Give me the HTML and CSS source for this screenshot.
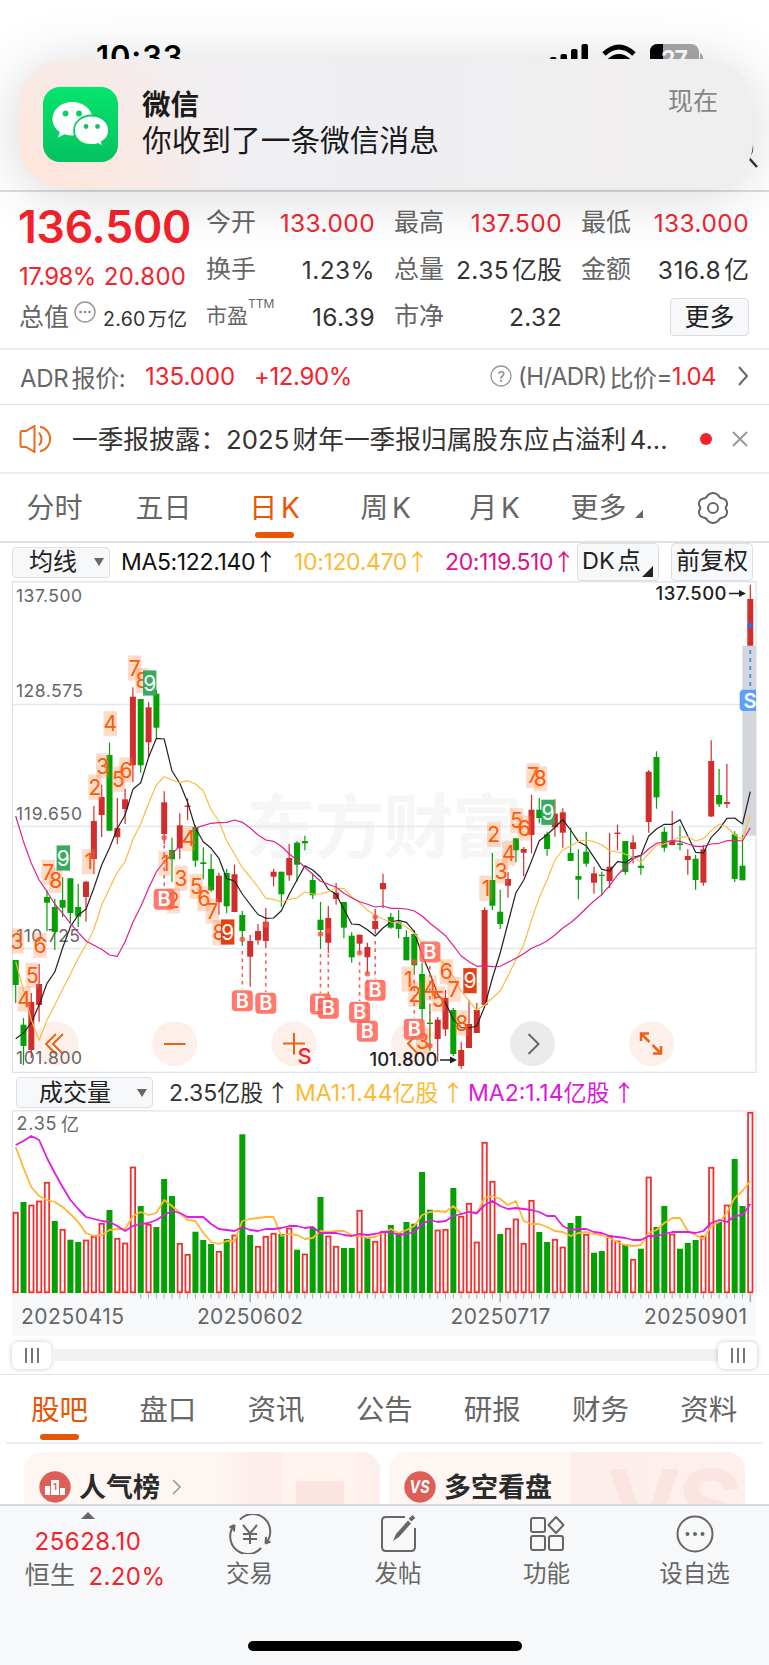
FILE: index.html
```html
<!DOCTYPE html>
<html lang="zh-CN">
  <head>
    <meta charset="UTF-8" />
    <meta name="viewport" content="width=device-width, initial-scale=1.0" />
    <title>行情 日K</title>
    <link rel="stylesheet" href="styles.css">
  </head>
  <body>
    <div class="screen">
      <div class="status-bar">
        <span class="time">10:33</span>
        <svg class="status-icons" width="156" height="28" viewBox="0 0 156 28">
          <rect x="1" y="14" width="6.5" height="14" rx="2" />
          <rect x="11.500" y="11" width="6.500" height="17" rx="2" />
          <rect x="22" y="6" width="6.500" height="22" rx="2" />
          <rect x="32.500" y="1" width="6.500" height="27" rx="2" />
          <g fill="none" stroke="#000" stroke-width="5">
            <path d="M55 11 Q70 -3 85 11" />
            <path d="M60 18 Q70 9 80 18" />
          </g>
          <rect x="101" y="1" width="49" height="26" rx="8" fill="#a8a8a8" />
          <path d="M109 1 H114 V27 H101 V9 Q101 1 109 1Z" />
          <path d="M151 10 q3 2 3 4 v6 h-3z" fill="#a8a8a8" />
          <text x="112" y="24" fill="#fff" font-size="23" font-weight="700" textLength="27">27</text>
        </svg>
      </div>
      <div class="nav-bar">
        <svg width="22" height="34" viewBox="0 0 22 34" fill="none" stroke="#333" stroke-width="2.500">
          <circle cx="-1" cy="12" r="12" />
          <path d="M7 21 L16 31" />
        </svg>
      </div>

      <div class="notice">
        <svg class="wechat" width="75" height="75" viewBox="0 0 75 75">
          <defs>
            <linearGradient id="wx" x1="0" y1="0" x2="0" y2="1">
              <stop offset="0" stop-color="#05e56c" />
              <stop offset="1" stop-color="#06c160" />
            </linearGradient>
          </defs>
          <rect width="75" height="75" rx="17" fill="url(#wx)" />
          <path fill="#fff" d="M29.500 15 C18 15 9.500 22.500 9.500 32 c0 5.500 2.800 10 7.300 13 l-1.800 5.500 6.500-3.300 c2.600.8 5.200 1.200 8 1.200 11 0 20-7.300 20-16.400 S40.500 15 29.500 15z" />
          <circle cx="22.500" cy="26.500" r="2.900" fill="#09cf65" />
          <circle cx="36" cy="26.500" r="2.900" fill="#09cf65" />
          <path fill="#fff" stroke="#07cd63" stroke-width="1.800" d="M48.500 28.500 C38.500 28.500 31 35 31 43.500 S38.500 58 48.500 58 c2.200 0 4.400-.3 6.400-1 l5.300 2.800-1.400-4.800 C63.500 52.200 66 48.200 66 43.500 66 35 58.500 28.500 48.500 28.500z" />
          <circle cx="43" cy="39.500" r="2.400" fill="#07c862" />
          <circle cx="54.500" cy="39.500" r="2.400" fill="#07c862" />
        </svg>
        <div class="notice-text">
          <strong>微信</strong>
          <p>你收到了一条微信消息</p>
        </div>
        <span class="notice-time">现在</span>
      </div>

      <div class="quote">
        <div class="quote-main">
          <div class="price">136.500</div>
          <div class="change"><span>17.98%</span><span class="amount">20.800</span></div>
          <div class="total">
            <span class="label">总值</span>
            <svg width="22" height="22" viewBox="0 0 22 22">
              <circle cx="11" cy="11" r="10" fill="none" stroke="#999" stroke-width="1.500" />
              <g fill="#888"><circle cx="6.500" cy="11" r="1.300" /><circle cx="11" cy="11" r="1.300" /><circle cx="15.500" cy="11" r="1.300" /></g>
            </svg>
            <span class="small-val">2.60<i>万亿</i></span>
          </div>
        </div>
        <dl class="quote-grid">
          <div><dt>今开</dt><dd class="red">133.000</dd></div>
          <div><dt>最高</dt><dd class="red">137.500</dd></div>
          <div><dt>最低</dt><dd class="red">133.000</dd></div>
          <div><dt>换手</dt><dd>1.23%</dd></div>
          <div><dt>总量</dt><dd>2.35<i>亿股</i></dd></div>
          <div><dt>金额</dt><dd>316.8<i>亿</i></dd></div>
          <div><dt class="pe">市盈<sup>TTM</sup></dt><dd>16.39</dd></div>
          <div><dt>市净</dt><dd>2.32</dd></div>
          <div class="more"><button>更多</button></div>
        </dl>
      </div>

      <div class="adr">
        <span class="adr-label">ADR<i>报价:</i></span>
        <span class="red adr-price">135.000</span>
        <span class="red">+12.90%</span>
        <span class="adr-right">
          <svg width="22" height="22" viewBox="0 0 22 22">
            <circle cx="11" cy="11" r="10" fill="none" stroke="#999" stroke-width="1.300" />
            <text x="11" y="16.500" font-size="15" text-anchor="middle" fill="#888">?</text>
          </svg>
          (H/ADR)<i>比价</i>=<b>1.04</b>
        </span>
        <svg class="adr-arrow" width="12" height="20" viewBox="0 0 12 20" fill="none" stroke="#666" stroke-width="2"><path d="M2 1 L10 10 L2 19" /></svg>
      </div>

      <div class="news">
        <svg width="34" height="28" viewBox="0 0 34 28" fill="none" stroke="#ea6a1c" stroke-width="2">
          <path d="M1.500 8 Q1.500 6 3 6 H7 L15.500 1 V27 L7 22 H3 Q1.500 22 1.500 20 Z" />
          <path d="M20 7.500 Q25 14 20 20.500" />
          <path d="M21 1.800 C34.500 4.500 34.500 23.500 21 26.200" />
        </svg>
        <p>一季报披露：2025 财年一季报归属股东应占溢利 4...</p>
        <span class="dot"></span>
        <svg width="16" height="16" viewBox="0 0 16 16" stroke="#999" stroke-width="2"><path d="M1 1 L15 15 M15 1 L1 15" /></svg>
      </div>

      <div class="period-tabs">
        <span>分时</span>
        <span>五日</span>
        <span class="active">日 K</span>
        <span>周 K</span>
        <span>月 K</span>
        <span class="with-corner">更多</span>
        <svg width="32" height="32" viewBox="0 0 32 32" fill="none" stroke="#666" stroke-width="2">
          <path d="M11 3 Q16 -1 21 3 Q22.500 6 25.500 6.500 Q30.500 7.500 30 13 Q27.500 16 30 19 Q30.500 24.500 25.500 25.500 Q22.500 26 21 29 Q16 33 11 29 Q9.500 26 6.500 25.500 Q1.500 24.500 2 19 Q4.500 16 2 13 Q1.500 7.500 6.500 6.500 Q9.500 6 11 3Z" />
          <circle cx="16" cy="16" r="5" />
        </svg>
      </div>

      <div class="ma-row">
        <span class="select ma-select">均线</span>
        <span class="ma5">MA5:122.140<i>↑</i></span>
        <span class="ma10">10:120.470<i>↑</i></span>
        <span class="ma20">20:119.510<i>↑</i></span>
        <span class="box dk">DK 点</span>
        <span class="box">前复权</span>
      </div>

      <svg id="kline" class="kline" width="769" height="493" viewBox="0 581 769 493"></svg>

      <div class="vol-row">
        <span class="select vol-select">成交量</span>
        <span class="vol-now">2.35亿股<i>↑</i></span>
        <span class="vol-ma1">MA1:1.44亿股<i>↑</i></span>
        <span class="vol-ma2">MA2:1.14亿股<i>↑</i></span>
      </div>

      <svg id="volume" class="volume" width="769" height="226" viewBox="0 1110 769 226"></svg>

      <div class="slider">
        <span class="handle"><i></i><i></i><i></i></span>
        <span class="track"></span>
        <span class="handle"><i></i><i></i><i></i></span>
      </div>

      <div class="info-tabs">
        <span class="active">股吧</span>
        <span>盘口</span>
        <span>资讯</span>
        <span>公告</span>
        <span>研报</span>
        <span>财务</span>
        <span>资料</span>
      </div>

      <div class="cards">
        <div class="card rank">
          <svg width="32" height="32" viewBox="0 0 32 32">
            <circle cx="16" cy="16" r="15.700" fill="#dd5f57" />
            <path d="M6 15 h5 v9 h-5z M12 9 h8 v15 h-8z M21 17 h5 v7 h-5z" fill="#fff" />
            <text x="16" y="19" font-size="9" font-weight="700" text-anchor="middle" fill="#dd5f57">1</text>
          </svg>
          <strong>人气榜</strong>
          <svg width="10" height="16" viewBox="0 0 10 16" fill="none" stroke="#999" stroke-width="1.600"><path d="M1 1 L8 8 L1 15" /></svg>
        </div>
        <div class="card versus">
          <svg width="32" height="32" viewBox="0 0 32 32">
            <circle cx="16" cy="16" r="15.700" fill="#dd5f57" />
            <text x="15.500" y="22" font-size="17" font-weight="700" font-style="italic" text-anchor="middle" textLength="20" lengthAdjust="spacingAndGlyphs" fill="#fff">VS</text>
          </svg>
          <strong>多空看盘</strong>
          <span class="ghost">VS</span>
        </div>
      </div>

      <div class="bottom-bar">
        <div class="index">
          <span class="up"></span>
          <span class="red index-val">25628.10</span>
          <span class="index-row"><i>恒生</i><b class="red">2.20%</b></span>
        </div>
        <div class="tool">
          <svg width="44" height="40" viewBox="0 0 44 40" fill="none" stroke="#666" stroke-width="2">
            <path d="M12 5.500 A17.500 17.500 0 0 1 37.500 29.500 L42.500 27.500 M37.500 29.500 L38 23" />
            <path d="M33 34 A17.500 17.500 0 0 1 6.500 11 L1.500 13.500 M6.500 11 L6 17.500" />
            <path d="M15 11 L22 19.500 L29 11 M22 19.500 V30 M15 20 H29 M15 25 H29" />
          </svg>
          <span>交易</span>
        </div>
        <div class="tool">
          <svg width="44" height="40" viewBox="0 0 44 40" fill="none" stroke="#666" stroke-width="2">
            <path d="M28 3 H9 Q5 3 5 7 V33 Q5 37 9 37 H34 Q38 37 38 33 V14" />
            <path d="M16 27 L19 20 L31 6.500 L34 9.500 L22 23Z" fill="#666" stroke="none" />
            <path d="M33 6 L37 2.500" stroke-width="4" />
          </svg>
          <span>发帖</span>
        </div>
        <div class="tool">
          <svg width="44" height="40" viewBox="0 0 44 40" fill="none" stroke="#666" stroke-width="2">
            <rect x="6" y="4" width="14" height="14" rx="2" />
            <rect x="6" y="22" width="14" height="14" rx="2" />
            <rect x="24" y="22" width="14" height="14" rx="2" />
            <path d="M31 3 L38.500 11 L31 19 L23.500 11Z" stroke-linejoin="round" />
          </svg>
          <span>功能</span>
        </div>
        <div class="tool">
          <svg width="44" height="40" viewBox="0 0 44 40">
            <circle cx="22" cy="20" r="17.500" fill="none" stroke="#666" stroke-width="2" />
            <g fill="#666"><circle cx="14.500" cy="20" r="2" /><circle cx="22" cy="20" r="2" /><circle cx="29.500" cy="20" r="2" /></g>
          </svg>
          <span>设自选</span>
        </div>
        <div class="home-bar"></div>
      </div>
    </div>
    <script src="chart.js"></script>
  </body>
</html>
```

FILE: styles.css
```css
* {
  margin: 0;
  padding: 0;
  box-sizing: border-box;
}

body {
  font-family: Inter, "Noto Sans CJK SC", sans-serif;
  background: #fff;
  color: #333;
}

i {
  font-style: normal;
}

b {
  font-weight: normal;
}

svg {
  display: block;
  flex: none;
}

svg text {
  font-family: Inter, "Noto Sans CJK SC", sans-serif;
}

.red {
  color: #f5222a;
}

.screen {
  position: relative;
  width: 769px;
  height: 1665px;
  overflow: hidden;
  display: flex;
  flex-direction: column;
}

.screen > * {
  flex: none;
}

.status-bar {
  height: 100px;
  padding: 43px 64px 0 96px;
  display: flex;
  justify-content: space-between;
}

.time {
  color: #000;
  font-size: 31px;
  line-height: 28px;
  font-weight: 600;
  letter-spacing: 0.9px;
}

.nav-bar {
  height: 92px;
  border-bottom: 2px solid #dcdcdc;
  display: flex;
  justify-content: flex-end;
  padding: 36px 6px 0 0;
}

/* push notification banner over the page */
.notice {
  position: absolute;
  left: 18px;
  top: 59px;
  width: 735px;
  height: 129px;
  border-radius: 46px;
  padding: 0 35px 0 25px;
  display: flex;
  background: radial-gradient(ellipse 190px 150px at 20px 115px, #ffe5db, rgba(255, 229, 219, 0)), linear-gradient(90deg, #f5edeb 0, #f0eff3 34%, #eeeef2 52%, #f1efef 80%, #efefef 100%);
  box-shadow: 0 6px 60px rgba(0, 0, 0, 0.16);
}

.wechat {
  margin-top: 28px;
}

.notice-text {
  flex: 1;
  padding: 27px 0 0 24px;
  color: #1a1a1a;
}

.notice-text strong {
  display: block;
  font-size: 28.500px;
  line-height: 38px;
}

.notice-text p {
  font-size: 29.700px;
  line-height: 33px;
}

.notice-time {
  font-size: 25px;
  line-height: 36px;
  margin-top: 24px;
  color: #858585;
}

.quote {
  height: 158px;
  border-bottom: 2px solid #ececec;
  display: flex;
  padding: 8px 19px 0;
}

.quote-main {
  width: 187px;
  white-space: nowrap;
}

.price {
  color: #f5222a;
  font-size: 44.500px;
  line-height: 54px;
  font-weight: 600;
  letter-spacing: -0.2px;
  margin-left: -1px;
}

.change {
  display: flex;
  color: #f5222a;
  font-size: 24px;
  line-height: 46px;
  letter-spacing: -0.6px;
}

.change .amount {
  margin-left: 8px;
  letter-spacing: 0.3px;
}

.total {
  display: flex;
  font-size: 25px;
  line-height: 34px;
  color: #666;
}

.total svg {
  margin: 1px 7px 0 5px;
}

.small-val {
  font-size: 19.500px;
  line-height: 38px;
  color: #333;
  letter-spacing: 0.3px;
}

.small-val i {
  margin-left: 2px;
}

.quote-grid {
  flex: 1;
  display: grid;
  grid-template-columns: 169px 168px 168px;
  grid-template-rows: 47px 47px 47px;
  column-gap: 19px;
}

.quote-grid div {
  display: flex;
  align-items: center;
  justify-content: space-between;
  white-space: nowrap;
  font-size: 24.500px;
  letter-spacing: 0.4px;
  line-height: 42px;
  padding-bottom: 2px;
}

.quote-grid dt {
  color: #666;
  font-size: 25px;
  letter-spacing: 0;
  line-height: 40px;
  margin-top: -2px;
}

.quote-grid dt.pe {
  font-size: 21px;
  position: relative;
}

.pe sup {
  position: absolute;
  left: 42px;
  top: -12px;
  font-size: 12px;
}

.quote-grid dd i {
  font-size: 25px;
  margin-left: 3px;
  letter-spacing: 0;
}

.quote-grid .more {
  justify-content: flex-end;
}

.more button {
  width: 79px;
  height: 38px;
  border: 1px solid #d9dce3;
  border-radius: 4px;
  background: #f7f8fa;
  font: 25px "Noto Sans CJK SC", sans-serif;
  line-height: 32px;
  padding-bottom: 3px;
  color: #222;
}

.adr {
  height: 55px;
  border-bottom: 1.500px solid #e2e3e8;
  display: flex;
  align-items: center;
  padding: 0 20px 2px;
  font-size: 24px;
}

.adr-label {
  width: 125px;
  color: #666;
  letter-spacing: -0.3px;
}

.adr-label i {
  margin-left: 3px;
}

.adr-price {
  width: 109px;
}

.adr-price + .red {
  letter-spacing: -0.4px;
}

.adr-right {
  margin-left: auto;
  display: flex;
  align-items: center;
  color: #666;
  letter-spacing: -0.6px;
}

.adr-right svg {
  margin-right: 6px;
}

.adr-right i {
  margin-left: 3px;
}

.adr-right b {
  color: #f5222a;
}

.adr-arrow {
  margin-left: 21px;
}

.news {
  height: 69px;
  border-bottom: 2px solid #eee;
  display: flex;
  align-items: center;
  padding: 0 20px 0 19px;
}

.news p {
  font-size: 25.700px;
  width: 600px;
  margin-left: 19px;
  margin-top: -2px;
  white-space: nowrap;
  word-spacing: -4px;
}

.dot {
  width: 12px;
  height: 12px;
  border-radius: 50%;
  background: #f5222a;
  margin: 0 20px 0 auto;
}

.news svg:last-child {
  margin-right: 1px;
}

.period-tabs {
  height: 69px;
  border-bottom: 2px solid #dfe1e9;
  display: grid;
  grid-template-columns: 109px 109px 113px 109px 109px 131px 65px;
  align-items: center;
  text-align: center;
  font-size: 28px;
  word-spacing: -4px;
  color: #666;
}

.period-tabs span {
  line-height: 66px;
}

.period-tabs .active {
  color: #ea5504;
}

.period-tabs .active::after,
.info-tabs .active::after {
  content: "";
  display: block;
  width: 39px;
  height: 6px;
  margin: -9px auto 3px;
  border-radius: 3px;
  background: #ea5504;
}

.period-tabs .with-corner {
  padding-right: 34px;
}

.with-corner::after {
  content: "";
  display: inline-block;
  margin-left: 8px;
  margin-right: -18px;
  border-bottom: 8px solid #666;
  border-left: 8px solid transparent;
}

.period-tabs svg {
  margin-left: 17px;
}

.ma-row {
  height: 38px;
  padding-left: 12px;
  display: grid;
  grid-template-columns: 109px 173px 151px 132px 94px 82px;
  align-items: center;
  font-size: 23px;
  letter-spacing: -0.35px;
  line-height: 34px;
  white-space: nowrap;
}

.ma-row .ma5,
.ma-row .ma10,
.ma-row .ma20 {
  margin-top: -3px;
}

.ma-row i,
.vol-row i {
  font-family: "Noto Sans CJK SC", sans-serif;
  display: inline-block;
  width: 16px;
}

.ma-row i {
  text-indent: -1px;
}

.vol-row i {
  text-indent: 3px;
}

.select,
.box {
  border: 1.500px solid #dddfe5;
  border-radius: 4px;
  background: #f7f8fa;
  font-size: 24px;
  letter-spacing: 0;
  color: #222;
}

.select {
  height: 31px;
  line-height: 26px;
  display: flex;
  align-items: center;
  justify-content: space-between;
}

.select::after {
  content: "";
  border: 5px solid transparent;
  border-top: 8px solid #666;
  border-bottom: 0;
}

.ma-select {
  width: 98px;
  padding: 0 5px 0 16px;
}

.ma5 {
  color: #111;
}

.ma10 {
  color: #fdb933;
}

.ma20 {
  color: #dd1188;
}

.box {
  position: relative;
  height: 38px;
  line-height: 34px;
  text-align: center;
  width: 82px;
}

.dk {
  text-align: left;
  padding-left: 4px;
  font-size: 23.500px;
  word-spacing: -4px;
}

.dk::after {
  content: "";
  position: absolute;
  right: 5px;
  bottom: 3px;
  border-bottom: 11px solid #222;
  border-left: 11px solid transparent;
}

.vol-row {
  height: 36px;
  padding: 3px 0 0 16px;
  display: grid;
  grid-template-columns: 153px 126px 173px auto;
  font-size: 23px;
  line-height: 28px;
  white-space: nowrap;
}

.vol-select {
  width: 137px;
  padding: 0 5px 0 22px;
}

.vol-ma1 {
  color: #fdb933;
}

.vol-ma2 {
  color: #e014e0;
}

.slider {
  height: 39px;
  border-bottom: 1.500px solid #e3e4ea;
  margin-bottom: 1px;
  padding: 0 12px;
  display: flex;
  align-items: center;
}

.track {
  flex: 1;
  height: 12px;
  background: #f1f1f4;
}

.handle {
  width: 39px;
  height: 27px;
  border-radius: 6px;
  background: #fff;
  box-shadow: 0 0 5px rgba(0, 0, 0, 0.22);
  display: flex;
  align-items: center;
  justify-content: center;
  gap: 4px;
}

.handle i {
  width: 2px;
  height: 15px;
  background: #777;
}

.info-tabs {
  height: 68px;
  margin: 0 6px;
  border-bottom: 2px solid #ececec;
  display: grid;
  grid-template-columns: repeat(7, 108.200px);
  text-align: center;
  font-size: 28.500px;
  line-height: 67px;
  color: #666;
}

.info-tabs span {
  margin-left: -1px;
}

.info-tabs .active {
  color: #ea5504;
}

.info-tabs .active::after {
  margin-top: -9px;
}

.cards {
  height: 60px;
  padding: 8px 24px 0;
  display: flex;
  gap: 9px;
  overflow: hidden;
}

.card {
  position: relative;
  width: 356px;
  height: 90px;
  flex: none;
  border-radius: 18px;
  overflow: hidden;
  display: flex;
  align-items: flex-start;
  padding: 19px 0 0 15px;
}

.card strong {
  font-size: 27px;
  line-height: 34px;
  margin: 0 12px 0 8px;
  font-weight: 700;
  color: #2b2b2b;
}

.card svg:nth-of-type(2) {
  margin-top: 8px;
}

.rank {
  background: linear-gradient(90deg, transparent 272px, #fbe3e0 272px, #fbe3e0 320px, transparent 320px) 0 29px no-repeat, linear-gradient(90deg, #fef6f2 195px, #fdeeeb 225px, #fdeeeb 258px, #fef3ef 258px, #fef3ef 333px, #fdefec 333px);
}

.versus {
  background: linear-gradient(90deg, #fef6f2 180px, #fdeeeb 182px, #fdefec);
}

.ghost {
  position: absolute;
  right: 6px;
  top: 9px;
  font-size: 100px;
  line-height: 90px;
  font-weight: 700;
  color: #fbe5e2;
  letter-spacing: -4px;
}

.bottom-bar {
  position: relative;
  height: 163px;
  border-top: 2px solid #d9dade;
  background: #f7f8fa;
  display: grid;
  grid-template-columns: 176px 148px 149px 148px 148px;
}

.index {
  display: flex;
  flex-direction: column;
  align-items: center;
  font-size: 24px;
}

.up {
  margin-top: 6px;
  border: 7px solid transparent;
  border-bottom: 7px solid #666;
  border-top: 0;
}

.index-val {
  line-height: 46px;
  letter-spacing: 0.5px;
}

.index-row {
  display: flex;
  gap: 13px;
  line-height: 24px;
  padding-left: 14px;
  letter-spacing: 0.4px;
}

.index-row i {
  font-size: 25px;
  line-height: 20px;
  color: #666;
}

.tool {
  display: flex;
  flex-direction: column;
  align-items: center;
  padding-top: 8px;
}

.tool span {
  margin-top: 3px;
  margin-left: -1px;
  font-size: 23.500px;
  line-height: 34px;
  color: #666;
}

.home-bar {
  position: absolute;
  left: 248px;
  bottom: 16px;
  width: 274px;
  height: 10px;
  border-radius: 5px;
  background: #000;
}
```

FILE: chart.js
```js
const STEP = 7.815;
const X0 = 15.7;
const RED = "#d22d2d";
const GREEN = "#04a004";
const cx = (i) => X0 + i * STEP;

// color, high, body top, body bottom, low
const candles = [
  ["g",960,960,985,1003],["g",1018,1024.7,1046,1065],["r",993,1002,1050,1058],["r",964,984,1005,1021.7],["g",890,897,902.7,931],
  ["g",898.7,907,932,950],["g",877,900,907.7,917],["g",878,878.3,913,923],["g",883.7,907,916.7,927],["r",881,881.7,897,921.7],
  ["r",806,821,859,874],["r",784.7,797,815,837],["g",742.7,755,830.7,831],["r",798,828,837.3,844],["r",788.7,799.3,809,824],
  ["r",687.3,696.7,765.3,782],["g",699,699,765.3,772.7],["r",702,707.3,742.3,757],["g",690,693.7,727.7,738],["r",791.3,802.3,834,844],
  ["g",837.7,850,859.3,881.7],["r",813.3,825.3,848.3,859],["r",798.3,805.6,807,820],["g",825,827,860.7,867],["g",847.3,862.3,864,879.3],
  ["g",854,869,890.3,891.7],["r",872.7,875.7,902.3,914.7],["g",869,873,906.3,913.3],["r",864.7,874.3,912,912],["g",911,915,931,945.7],
  ["r",935,941,956.7,986.7],["r",924,931,940.3,944.7],["r",908,921.7,941,948.3],["r",868.7,871.7,876.7,886.3],["g",871.7,871.7,894.3,906.7],
  ["r",844,858,875.3,880.7],["g",841.3,842.7,864.7,881.3],["g",835.7,841,843.3,850.3],["g",873.3,880,895.3,899],["g",902,919.7,930,949],
  ["r",906,918,942.7,953],["r",883,892.7,899,904.7],["g",902,902,927.7,938.3],["g",932.3,935.7,957.3,962.7],["r",934.7,934.7,943.7,953.3],
  ["r",942.7,947,957.3,974],["r",909,921,929,934],["r",873.7,883,889.3,908],["g",913,917,927.7,928.7],["g",910,922.3,929,938.3],
  ["g",930.3,937,960.3,960.3],["g",930,934,965.3,974.7],["g",962.7,974,1009,1023],["g",1006.7,1022.6,1024,1050.7],["r",1017,1019.7,1039,1061.7],
  ["r",990,998,1029.3,1036],["g",1008,1010,1054,1056],["r",1041.7,1050,1066,1068.7],["r",999.7,1024,1048,1048],["r",1002.7,1010,1033,1033],
  ["r",907.3,910,1005,1005],["g",853,880,905.7,910],["g",889.7,911.7,924,929],["r",872,879,885.7,897.7],["g",838.3,838.3,850.3,862.3],
  ["r",847,849,852.7,876],["r",794.7,809.7,835,853.3],["g",798,809.7,818,823.3],["g",831.7,834.3,849,855.7],["r",799.3,813.7,827.3,836.7],
  ["r",808.3,812.3,832.7,847.7],["g",827.7,853,861,861],["g",849.3,876,879.7,899.3],["g",831.7,851.7,863.7,866.7],["r",866.7,873.3,882.7,893.7],
  ["g",871.7,874.8,876,895],["r",833,866.7,881,888.3],["r",824.7,832.6,834,850.3],["g",841,841,872,874.7],["r",835.3,842.3,849,863.3],
  ["g",856,865.7,868,874.7],["r",770,771.7,822,832.7],["g",751.3,757,797.3,808.7],["g",827,831.7,847.7,851.7],["r",811,840.7,845,845],
  ["g",825.7,843.4,845,850.3],["r",849.3,856,860,874.7],["g",854.7,858.7,880,889.7],["r",845.3,849.3,882.7,885.7],["r",740.3,761,816.5,817],
  ["g",769,795,804.3,807],["r",763.7,802,804,808],["g",831.3,834.3,879,882],["g",835,865.7,880.3,880.3],["r",584.7,599,645.7,645.7],
];

const ma5 = [1038.7,1033,1022.7,1005,983.3,972,948,926.7,915,909.3,888,865,848,828.5,815,789.3,782.7,757.3,738.3,739,771,783.3,802.3,828,841.7,848.3,858.3,878.7,881,894,904.5,914.5,918.3,918,910.7,894.3,880,865.7,870,877,889.3,894.3,909.3,924,924.7,929.7,936,928,922,920.3,922.3,931.7,955,973.3,994.3,1002.7,1019.3,1027.7,1028,1026,1006.7,978,953,923,892.7,880.3,861,840.7,834.7,827.3,819.7,830,841.7,845.7,857.3,869.3,871,861.7,862.7,857.3,855.3,836,829,824.3,824.3,819.7,836,852.3,853,837.3,829.3,818.3,818,824,791.7];
const ma10 = [961.7,990,1020,1040.3,1020,1005,989.3,974.3,958.3,945,929.3,905,888.3,872.3,861.7,839.3,824,803.3,785,776.7,780,782.7,780.7,784,790.7,810,821,840.7,854,867.7,877,887,898.3,899.3,902.3,899.3,898,892,894,894,891.7,888.3,888.7,897,902.7,910.3,915.3,919,922,922.7,927,933.3,943,951.7,958.3,965,976.7,991,1001,1010,1005,998,991,975.7,960,944.7,920,897.3,880,860,850,846,841.3,840,841.7,844.7,850.7,852,854,857.3,862.3,853.7,845.3,844,840.3,837.3,836.7,841,838.7,830.7,824.3,827.3,834.7,839.3,815];
const ma20 = [816,841.7,863.3,880,891.7,904,913.3,923.3,932.3,941,945.3,949.3,955,956.3,941.7,922.3,906.7,888.3,871.7,861.7,854.3,845.7,835.7,828,825.7,823.3,822.7,822.3,820,822.3,828,835,840,841.3,846.3,854,860,867.3,874.3,881.3,884.3,887.3,893.3,897.7,901.7,904.3,907,906,908.3,908.3,909,911,916,923.3,929.3,935.7,945.7,956,961.7,966.3,965.7,966.7,966.3,962.3,958.3,953.7,948.3,945,941,935,928,922.7,916,908.3,901,894.7,885.7,875,867,858.7,855.7,849,843.3,842,840.7,841.3,844,846.3,846.3,844,843.3,840.7,840.3,841,827.7];

const volumes = "r1212 g1202 r1204.7 r1200.7 r1182 g1221 r1229 g1239.7 g1242 r1239.7 r1236 r1223 g1210 r1238 r1242.7 r1166.7 g1206 r1224 g1227 g1179 g1196 r1243 r1254 g1231.7 g1240 g1244 r1251 g1239 r1234.7 g1134.3 g1235 r1246 r1236 r1233 g1234 r1227.7 g1249.7 r1253.7 g1227.7 g1197 r1235.7 r1246 g1248 g1248 r1210 g1237.7 r1241 r1231 g1225 g1233 g1222 g1223.7 g1172 g1209.7 r1229.7 r1229 g1188 r1216 r1203 r1241.7 r1142 r1181 g1234 r1228 r1218.7 r1243 r1200 g1232 g1242 r1239 r1246.7 g1223 g1216 r1234 g1252.7 g1251 r1235.7 r1240.7 g1244.7 r1259 g1248.7 r1176.7 g1227 g1206 r1233.7 g1248.7 g1243 g1240 r1235.7 r1167 g1222 r1204.7 g1159 g1206 r1112".split(" ");
const volMa1 = [1147,1168,1187,1196,1200,1202,1207,1214,1222,1233,1236,1235,1230,1229,1229,1216,1212,1215,1213,1200,1206,1213,1220,1221,1233,1242,1244,1241,1241,1221,1219,1218,1217,1217,1236,1234,1235,1239,1238,1231,1232,1231,1231,1235,1236,1238,1237,1233,1229,1233,1230,1226,1215,1212,1211,1212,1206,1214,1212,1214,1198,1196,1199,1205,1201,1221,1224,1224,1227,1231,1232,1236,1233,1232,1234,1235,1238,1242,1245,1246,1245,1233,1230,1223,1218,1218,1231,1235,1239,1226,1222,1213,1198,1191,1181];
const volMa2 = [1145,1141,1136,1140,1158,1173,1187,1200,1209,1217,1219,1221,1222,1226,1231,1226,1224,1223,1220,1215,1211,1213,1217,1217,1217,1224,1229,1230,1231,1227,1230,1231,1229,1229,1228,1226,1226,1228,1227,1233,1233,1233,1235,1236,1234,1235,1234,1232,1232,1235,1234,1232,1224,1220,1222,1221,1216,1214,1212,1213,1205,1201,1206,1209,1208,1209,1210,1212,1216,1216,1226,1230,1229,1229,1232,1233,1236,1237,1238,1240,1240,1236,1236,1234,1232,1232,1232,1233,1231,1223,1220,1222,1216,1215,1204];

// nine-turn counters: x, y, digit, optional kind for the final 9
const counts = [
  [17,941,3],[24.3,999,4],[32.3,975.3,5],[40,945.3,6],[48.3,872.3,7],[55.7,880.3,8],[63.3,858,9,"up"],
  [88.7,861.7,1],[95,787.3,2],[102.7,766,3],[110.3,723.7,4],[118.3,779.3,5],[126,770,6],[134.7,668,7],[142,680.5,8],[149.7,683,9,"up"],
  [165.3,863.3,1],[173.3,900.7,2],[181,878.3,3],[188.7,838.7,4],[196.3,886.3,5],[204,898.7,6],[212.3,911,7],[219,932.7,8],[227.7,932,9,"down"],
  [408.3,979,1],[415,994.3,2],[422.7,1041.7,3],[430.3,988,4],[438.3,999,5],[446.3,971.7,6],[454,989.3,7],[461.7,1023,8],[470,980.7,9,"down"],
  [486,888.3,1],[493.7,834.3,2],[501.3,871,3],[508.7,853.3,4],[516.7,820.7,5],[524.3,828,6],[533,775.7,7],[540.3,778.7,8],[548,812.3,9,"up"],
];

// buy marks: candle index, dot y, dash start, dash end, badge y
const buys = [
  [19,837.7,845,888,899.3],[29,939.3,951,989,1000.7],[32,925,953,992,1003.3],[39,934,954,993,1004],[40,930.7,954,997,1008.3],
  [44,953,962,1001,1012.3],[45,973.7,980,1020,1031.3],[46,917,941,979,990.3],[51,962,980,1018,1029.3],[53,1045.7,966,1038,952],
];

function line(values, color, width) {
  const pts = values.map((y, i) => `${cx(i).toFixed(1)},${y}`).join(" ");
  return `<polyline points="${pts}" fill="none" stroke="${color}" stroke-width="${width}" stroke-linejoin="round"/>`;
}

function text(x, y, str, size, color, length, extra = "") {
  return `<text x="${x}" y="${y}" font-size="${size}" fill="${color}" textLength="${length}" ${extra}>${str}</text>`;
}

function drawKline() {
  let s = `<defs><clipPath id="plot"><rect x="12" y="581" width="744" height="492"/></clipPath></defs>`;
  s += `<text x="246" y="853" font-size="70" font-weight="700" fill="#f6f6f6" textLength="276">东方财富</text>`;
  s += `<path d="M12.500 704.500H756M12.500 826.500H756M12.500 948.500H756" stroke="#e4e7ef" stroke-width="1.300"/>`;
  s += `<rect x="12.500" y="581.800" width="743.500" height="490.500" fill="none" stroke="#dddfe4" stroke-width="1.200"/>`;
  s += `<rect x="742.300" y="645.700" width="13.700" height="190" fill="#d3d6dc"/>`;
  s += `<g clip-path="url(#plot)">`;

  [["56", "#fdf0ea"], ["174.700", "#fdf0ea"], ["294", "#fdf0ea"], ["413.500", "#fdf0ea"], ["532.500", "#ebebeb"], ["651.500", "#fdf0ea"]].forEach(([x, fill]) => {
    s += `<circle cx="${x}" cy="1043.700" r="22.500" fill="${fill}"/>`;
  });
  s += `<g fill="none" stroke="#ec6215" stroke-width="2">
    <path d="M56 1034L46 1044L56 1054M63 1034L53 1044L63 1054M164 1044H185.500M283 1043.500H305M294 1033V1054.500M417 1034L408 1043.500L417 1053"/>
    <path d="M641 1041V1033.500H649M641 1033.500L649.500 1042M661 1046V1053.500H653M661 1053.500L652.500 1045" stroke-width="2.500"/></g>`;
  s += `<path d="M528.500 1034L538.500 1044L528.500 1054" fill="none" stroke="#666" stroke-width="2"/>`;

  s += text(16, 602, "137.500", 17.5, "#666", 66);
  s += text(16, 697, "128.575", 17.5, "#666", 67);
  s += text(16, 820, "119.650", 17.5, "#666", 66);
  s += text(16, 942, "110.725", 17.5, "#666", 64);
  s += text(16, 1064, "101.800", 17.5, "#666", 66);

  candles.forEach(([c, high, top, bottom, low], i) => {
    const color = c === "r" ? RED : GREEN;
    const x = cx(i);
    s += `<path d="M${x.toFixed(1)} ${high}V${low}" stroke="${color}" stroke-width="1.200"/>`;
    s += `<rect x="${(x - 3).toFixed(1)}" y="${top}" width="6" height="${(bottom - top).toFixed(1)}" fill="${color}"/>`;
  });
  s += line(ma5, "#222", 1.2) + line(ma10, "#fdbb45", 1.2) + line(ma20, "#e0218f", 1.2);

  counts.forEach(([x, y, n, kind]) => {
    const fill = kind === "up" ? "#33a85c" : kind === "down" ? "#e23c0c" : "#ff8a50";
    s += `<rect x="${x - 6.7}" y="${y - 12.6}" width="13.400" height="25.200" fill="${fill}" fill-opacity="${kind ? 0.97 : 0.3}"/>`;
    s += `<text x="${x}" y="${y + 7.5}" font-size="21" text-anchor="middle" fill="${kind ? "#fff" : "#fa5a05"}">${n}</text>`;
  });

  buys.forEach(([i, dot, from, to, y]) => {
    const x = cx(i);
    s += `<circle cx="${x}" cy="${dot}" r="2.800" fill="#f4503f" fill-opacity=".8"/>`;
    s += `<path d="M${x} ${from}V${to}" stroke="#f8604f" stroke-width="1.600" stroke-dasharray="3.500 4"/>`;
    s += `<rect x="${x - 10.5}" y="${y - 10.5}" width="21" height="21" rx="4" fill="#ff6152" fill-opacity=".85"/>`;
    s += `<text x="${x}" y="${y + 7}" font-size="20" font-weight="600" text-anchor="middle" fill="#fff">B</text>`;
  });

  // sell mark on the last candle
  s += `<circle cx="750.200" cy="625.500" r="2.800" fill="#4a63c8"/>`;
  s += `<path d="M750.200 650V687" stroke="#4a92f0" stroke-width="2" stroke-dasharray="4 4"/>`;
  s += `<rect x="739.700" y="689.700" width="21" height="21.300" rx="4" fill="#5c9ffc"/>`;
  s += `<text x="750" y="707.500" font-size="20" font-weight="600" text-anchor="middle" fill="#fff">S</text>`;
  s += `<text x="304.500" y="1064" font-size="22" font-weight="500" text-anchor="middle" fill="#f5222a">S</text>`;

  s += text(655.5, 600, "137.500", 18.5, "#222", 71, `font-weight="500"`);
  s += text(369.5, 1066, "101.800", 18.5, "#222", 68, `font-weight="500"`);
  s += `<path d="M729 593.500H743M440 1060H454" stroke="#222" stroke-width="1.600"/>`;
  s += `<path d="M746 593.500L739 590V597ZM457 1060L450 1056.500V1063.500Z" fill="#222"/>`;
  s += `</g>`;
  document.getElementById("kline").innerHTML = s;
}

function drawVolume() {
  let s = `<rect x="12" y="1293" width="744" height="43" fill="#f7f8fa"/>`;
  s += `<path d="M12.500 1293V1110.800H756V1293" fill="none" stroke="#e2e4e9" stroke-width="1.300"/>`;
  s += text(16.5, 1130, "2.35", 18, "#666", 40) + text(61, 1131, "亿", 18, "#666", 18);
  volumes.forEach((v, i) => {
    const x = cx(i);
    const y = parseFloat(v.slice(1));
    if (v[0] === "r") {
      s += `<rect x="${x - 2.2}" y="${y + 0.8}" width="4.400" height="${1291.5 - y}" fill="#fff" stroke="#f4302f" stroke-width="1.800"/>`;
    } else {
      s += `<rect x="${x - 3}" y="${y}" width="6" height="${1293 - y}" fill="${GREEN}"/>`;
    }
    if (i >= 16) {
      const major = i % 32 === 30;
      s += `<path d="M${x} 1293.500V${major ? 1302 : 1298.5}" stroke="#aaa" stroke-width="${major ? 1.6 : 1}"/>`;
    }
  });
  s += line(volMa1, "#ffb733", 1.8) + line(volMa2, "#e21be2", 1.8);
  s += text(21, 1324, "20250415", 21, "#666", 103);
  s += text(197, 1324, "20250602", 21, "#666", 106);
  s += text(450.5, 1324, "20250717", 21, "#666", 100);
  s += text(644, 1324, "20250901", 21, "#666", 103);
  document.getElementById("volume").innerHTML = s;
}

drawKline();
drawVolume();
```
